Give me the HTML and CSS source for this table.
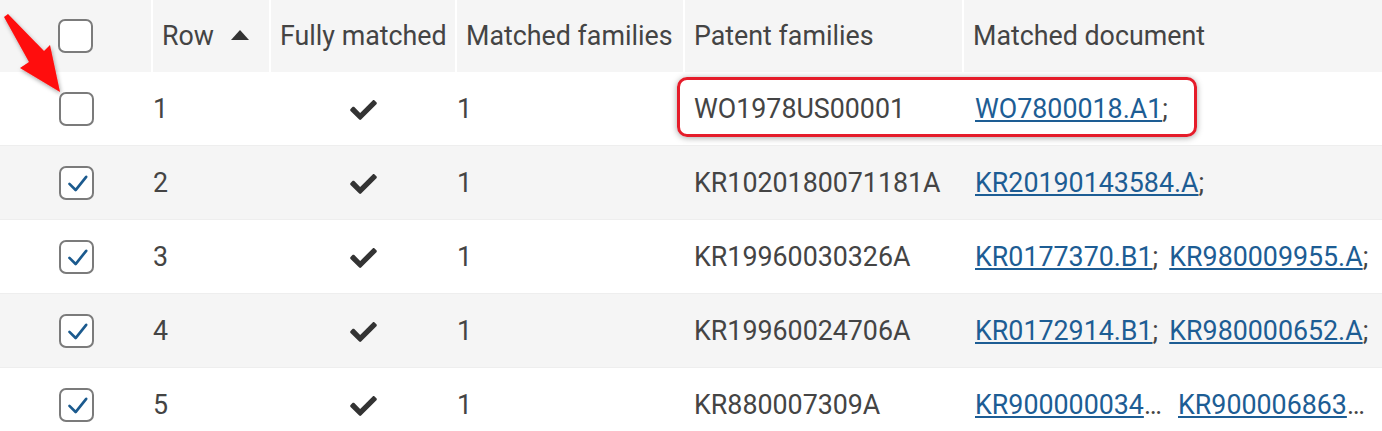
FILE: index.html
```html
<!DOCTYPE html>
<html lang="en">
<head>
<meta charset="utf-8">
<title>Matched documents</title>
<link rel="stylesheet" href="styles.css">
</head>
<body>
<div class="page">
  <table class="grid">
    <colgroup>
      <col class="c-sel"><col class="c-row"><col class="c-full"><col class="c-fam"><col class="c-pat"><col class="c-doc">
    </colgroup>
    <thead>
      <tr>
        <th class="sel"><span class="cb"></span></th>
        <th class="row-h">Row <span class="sort"></span></th>
        <th>Fully matched</th>
        <th>Matched families</th>
        <th>Patent families</th>
        <th>Matched document</th>
      </tr>
    </thead>
    <tbody>
      <tr>
        <td class="sel"><span class="cb"></span></td>
        <td class="num">1</td>
        <td class="full"><svg class="ok" viewBox="0 64 512 384"><path d="M173.898 439.404l-166.4-166.4c-9.997-9.997-9.997-26.206 0-36.204l36.203-36.204c9.997-9.998 26.207-9.998 36.204 0L192 312.69 432.095 72.596c9.997-9.997 26.207-9.997 36.204 0l36.203 36.204c9.997 9.997 9.997 26.206 0 36.204l-294.4 294.401c-9.998 9.997-26.207 9.997-36.204-.001z"/></svg></td>
        <td class="num">1</td>
        <td class="pat">WO1978US00001</td>
        <td class="doc"><div class="docs"><span class="item"><a href="#">WO7800018.A1</a>;</span></div></td>
      </tr>
      <tr>
        <td class="sel"><span class="cb on"><svg viewBox="0 0 34 34"><polyline points="9,18 16,25 28,10"/></svg></span></td>
        <td class="num">2</td>
        <td class="full"><svg class="ok" viewBox="0 64 512 384"><path d="M173.898 439.404l-166.4-166.4c-9.997-9.997-9.997-26.206 0-36.204l36.203-36.204c9.997-9.998 26.207-9.998 36.204 0L192 312.69 432.095 72.596c9.997-9.997 26.207-9.997 36.204 0l36.203 36.204c9.997 9.997 9.997 26.206 0 36.204l-294.4 294.401c-9.998 9.997-26.207 9.997-36.204-.001z"/></svg></td>
        <td class="num">1</td>
        <td class="pat">KR1020180071181A</td>
        <td class="doc"><div class="docs"><span class="item"><a href="#">KR20190143584.A</a>;</span></div></td>
      </tr>
      <tr>
        <td class="sel"><span class="cb on"><svg viewBox="0 0 34 34"><polyline points="9,18 16,25 28,10"/></svg></span></td>
        <td class="num">3</td>
        <td class="full"><svg class="ok" viewBox="0 64 512 384"><path d="M173.898 439.404l-166.4-166.4c-9.997-9.997-9.997-26.206 0-36.204l36.203-36.204c9.997-9.998 26.207-9.998 36.204 0L192 312.69 432.095 72.596c9.997-9.997 26.207-9.997 36.204 0l36.203 36.204c9.997 9.997 9.997 26.206 0 36.204l-294.4 294.401c-9.998 9.997-26.207 9.997-36.204-.001z"/></svg></td>
        <td class="num">1</td>
        <td class="pat">KR19960030326A</td>
        <td class="doc"><div class="docs"><span class="item"><a href="#">KR0177370.B1</a>;</span><span class="item"><a href="#">KR980009955.A</a>;</span></div></td>
      </tr>
      <tr>
        <td class="sel"><span class="cb on"><svg viewBox="0 0 34 34"><polyline points="9,18 16,25 28,10"/></svg></span></td>
        <td class="num">4</td>
        <td class="full"><svg class="ok" viewBox="0 64 512 384"><path d="M173.898 439.404l-166.4-166.4c-9.997-9.997-9.997-26.206 0-36.204l36.203-36.204c9.997-9.998 26.207-9.998 36.204 0L192 312.69 432.095 72.596c9.997-9.997 26.207-9.997 36.204 0l36.203 36.204c9.997 9.997 9.997 26.206 0 36.204l-294.4 294.401c-9.998 9.997-26.207 9.997-36.204-.001z"/></svg></td>
        <td class="num">1</td>
        <td class="pat">KR19960024706A</td>
        <td class="doc"><div class="docs"><span class="item"><a href="#">KR0172914.B1</a>;</span><span class="item"><a href="#">KR980000652.A</a>;</span></div></td>
      </tr>
      <tr>
        <td class="sel"><span class="cb on"><svg viewBox="0 0 34 34"><polyline points="9,18 16,25 28,10"/></svg></span></td>
        <td class="num">5</td>
        <td class="full"><svg class="ok" viewBox="0 64 512 384"><path d="M173.898 439.404l-166.4-166.4c-9.997-9.997-9.997-26.206 0-36.204l36.203-36.204c9.997-9.998 26.207-9.998 36.204 0L192 312.69 432.095 72.596c9.997-9.997 26.207-9.997 36.204 0l36.203 36.204c9.997 9.997 9.997 26.206 0 36.204l-294.4 294.401c-9.998 9.997-26.207 9.997-36.204-.001z"/></svg></td>
        <td class="num">1</td>
        <td class="pat">KR880007309A</td>
        <td class="doc"><div class="docs"><span class="item"><a href="#">KR900000034.A</a>;</span><span class="item"><a href="#">KR900006863.A</a>;</span></div></td>
      </tr>
    </tbody>
  </table>

  <div class="highlight"></div>
  <svg class="pointer" viewBox="0 0 70 100" width="70" height="100">
    <defs>
      <filter id="sh" x="-30%" y="-30%" width="160%" height="160%">
        <feDropShadow dx="1" dy="2" stdDeviation="2" flood-color="#000" flood-opacity="0.35"/>
      </filter>
    </defs>
    <polygon points="4,17 8,14 44,51 50,45 60,92 20,68 29,62" fill="#ff0a0a" filter="url(#sh)"/>
  </svg>
</div>
</body>
</html>
```

FILE: styles.css
```css
html, body {
  margin: 0;
  padding: 0;
  background: #fff;
}

body {
  font-family: Roboto, "Liberation Sans", sans-serif;
  font-size: 26.8px;
  color: #444;
  overflow: hidden;
}

.page {
  position: relative;
  width: 1382px;
}

.grid {
  width: 1382px;
  border-collapse: collapse;
  table-layout: fixed;
}

.c-sel { width: 152px; }
.c-row { width: 118px; }
.c-full { width: 186px; }
.c-fam { width: 228px; }
.c-pat { width: 279px; }
.c-doc { width: 419px; }

.grid th {
  height: 72px;
  padding: 0 0 0 9px;
  background: #f5f5f5;
  font-weight: 400;
  text-align: left;
  white-space: nowrap;
  border-left: 2px solid #fff;
  color: #444;
}

.grid th.sel {
  border-left: 0;
  padding: 0;
  text-align: center;
}

.sort {
  display: inline-block;
  width: 0;
  height: 0;
  margin-left: 10px;
  border-left: 9px solid transparent;
  border-right: 9px solid transparent;
  border-bottom: 10px solid #333;
  vertical-align: 5px;
}

.grid td {
  height: 73px;
  padding: 0;
  border-bottom: 1px solid #eeeeee;
  white-space: nowrap;
}

.grid tbody tr:nth-child(even) td {
  background: #f5f5f5;
}

.grid td.sel {
  text-align: center;
}

.grid td.num {
  padding-left: 1px;
}

.grid td.full {
  text-align: center;
}

.grid td.pat {
  padding-left: 10px;
}

.grid td.doc {
  padding: 0 12px;
}

.cb {
  display: inline-block;
  box-sizing: border-box;
  width: 35px;
  height: 34px;
  border: 2px solid #7b7b7b;
  border-radius: 7px;
  background: #fff;
  vertical-align: middle;
}

.cb svg {
  display: block;
  width: 31px;
  height: 30px;
}

.cb polyline {
  fill: none;
  stroke: #1b5a8e;
  stroke-width: 3;
  stroke-linecap: round;
  stroke-linejoin: round;
}

.ok {
  width: 27px;
  height: 20px;
  fill: #333;
  vertical-align: middle;
}

.docs {
  display: flex;
  gap: 11px;
}

.item {
  min-width: 0;
  overflow: hidden;
  text-overflow: ellipsis;
  white-space: nowrap;
}

.item a {
  color: #1d5d94;
  text-decoration: underline;
}

.highlight {
  position: absolute;
  left: 677px;
  top: 77px;
  width: 520px;
  height: 60px;
  box-sizing: border-box;
  border: 3px solid #e51c2a;
  border-radius: 10px;
  box-shadow: 0 1px 6px rgba(0, 0, 0, 0.35);
}

.pointer {
  position: absolute;
  left: 0;
  top: 0;
  overflow: visible;
}
```
